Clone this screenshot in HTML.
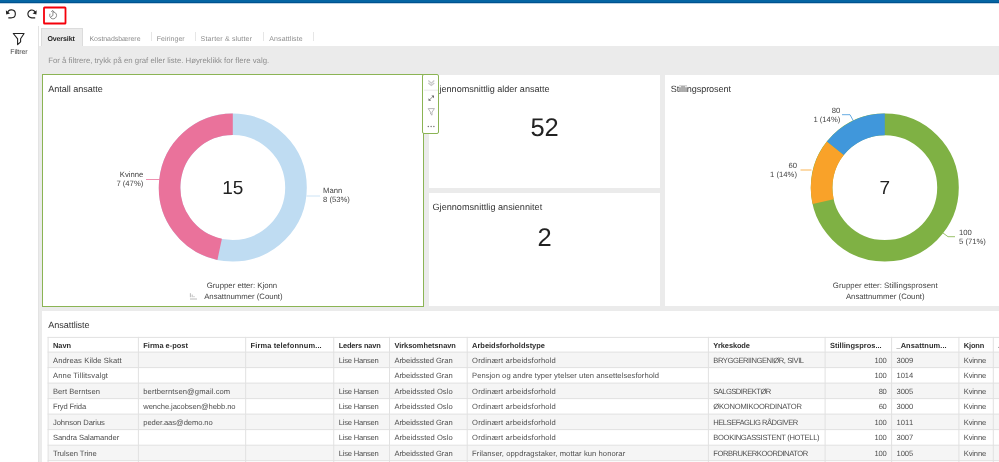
<!DOCTYPE html>
<html lang="no">
<head>
<meta charset="utf-8">
<title>Oversikt</title>
<style>
*{box-sizing:border-box;margin:0;padding:0}
html,body{width:999px;height:462px;overflow:hidden;background:#fff}
body{font-family:"Liberation Sans", sans-serif;color:#333;position:relative;text-rendering:geometricPrecision}
#root{position:absolute;left:0;top:0;width:999px;height:462px;will-change:transform}
.abs{position:absolute}
.t{position:absolute;white-space:nowrap;line-height:1}
#topbar{left:0;top:0;width:999px;height:4px;background:linear-gradient(#0565a3 0,#0565a3 2px,#00528f 2px,#00528f 3px,#bcd3e4 3px,#bcd3e4 4px)}
#vline{left:38px;top:26px;width:1px;height:436px;background:#e3e3e3}
#gray{left:39px;top:46px;width:960px;height:416px;background:#ebebeb}
#redbox{left:43px;top:7px;width:24px;height:18px;border:2px solid #f5000a}
#tabact{left:41px;top:28px;width:42px;height:18px;background:#ebebeb;border:1px solid #dcdcdc;border-bottom:none}
.tsep{position:absolute;top:32px;width:1px;height:9px;background:#e6e6e6}
.panel{position:absolute;background:#fff}
#p1{left:42px;top:74px;width:382px;height:233px;border:1px solid #8bb454}
#menu{left:422px;top:74px;width:17px;height:60px;border:1px solid #8bb454;border-radius:2px;background:#fff}
#p2{left:429px;top:75px;width:231px;height:113px}
#p3{left:429px;top:193px;width:231px;height:113px}
#p4{left:665px;top:75px;width:334px;height:231px}
#p5{left:42px;top:311px;width:957px;height:151px}
table{position:absolute;left:48.1px;top:337.4px;border-collapse:separate;border-spacing:0;table-layout:fixed;width:1011.90px;font-size:7.6px;color:#4e4e4e}
td,th{padding:0 0 0 4.9px;text-align:left;white-space:nowrap;overflow:hidden;font-weight:normal;line-height:1;vertical-align:top}
td{padding-top:4.80px}
th{font-weight:bold;color:#2e2e2e;font-size:7.45px;padding-top:4.30px}
td.n{text-align:right;padding-right:5.1px;padding-left:0}
</style>
</head>
<body>
<div id="root">
<div class="abs" id="topbar"></div>
<div class="abs" id="vline"></div>
<div class="abs" id="gray"></div>

<svg class="abs" style="left:0;top:3px" width="70" height="24" viewBox="0 3 70 24">
  <g fill="none" stroke="#222" stroke-width="1.15" stroke-linejoin="round">
    <path d="M7.5 13.2 A3.95 3.95 0 1 1 11.6 17.8 H8.3"/>
    <path d="M32.2 17.8 H34.6 M32.2 17.8 A3.95 3.95 0 1 1 35.1 13.2" transform="translate(0.6 0)"/>
  </g>
  <path d="M5.9 10.2 L6.2 14.4 L10 13.4 Z" fill="#222"/>
  <path d="M36.7 10.2 L36.4 14.4 L32.6 13.4 Z" fill="#222"/>
  <g fill="none" stroke="#666" stroke-width="0.75" stroke-linecap="round" stroke-linejoin="round">
    <path d="M52.7 11.85 A3.5 3.5 0 1 1 49.8 14.1"/>
    <path d="M51.5 11.5 L52.7 10.4 L53.6 11.9"/>
    <path d="M52.9 12.8 V15.5 L51.3 16.5"/>
  </g>
  <rect x="44" y="7.5" width="21.5" height="16" fill="none" stroke="#f5000a" stroke-width="1.8" rx="0.6"/>
</svg>

<svg class="abs" style="left:10px;top:31px" width="20" height="16" viewBox="10 31 20 16">
  <path d="M13.3 33.5 L24.1 33.5 L20.6 38.8 L20.6 41.8 L17.6 44.6 L17.6 38.8 Z" fill="none" stroke="#222" stroke-width="1.1" stroke-linejoin="round"/>
</svg>

<div class="abs" id="tabact"></div>
<div class="tsep" style="left:151px"></div>
<div class="tsep" style="left:195px"></div>
<div class="tsep" style="left:263px"></div>
<div class="tsep" style="left:313px"></div>

<div class="panel" id="p2"></div>
<div class="panel" id="p3"></div>
<div class="panel" id="p4"></div>
<div class="panel" id="p5"></div>
<div class="panel" id="p1"></div>

<svg class="abs" style="left:42px;top:74px" width="957" height="233" viewBox="42 74 957 233"><circle cx="232.8" cy="187.5" r="63.2" stroke="#bfdcf2" stroke-width="21.6" fill="none"/>
<path d="M219.66 249.32 A63.2 63.2 0 0 1 232.80 124.30" stroke="#ea729b" stroke-width="21.6" fill="none"/>
<circle cx="884.8" cy="187.6" r="63.2" stroke="#7fb144" stroke-width="21.6" fill="none"/>
<path d="M823.18 201.66 A63.2 63.2 0 0 1 835.39 148.20" stroke="#f9a229" stroke-width="21.6" fill="none"/>
<path d="M835.39 148.20 A63.2 63.2 0 0 1 884.80 124.40" stroke="#4097db" stroke-width="21.6" fill="none"/>
<path d="M146 179.5 H159.5" stroke="#ea729b" stroke-width="0.8" fill="none"/>
<path d="M306.5 196 H320" stroke="#bfdcf2" stroke-width="0.8" fill="none"/>
<path d="M842 114.7 H850 L854 122" stroke="#4097db" stroke-width="0.8" fill="none"/>
<path d="M800.5 170 H811.5" stroke="#f9a229" stroke-width="0.8" fill="none"/>
<path d="M943 233 L948 236.7 H955" stroke="#7fb144" stroke-width="0.8" fill="none"/>
<path d="M190.4 293.2 V297.2 M192.2 294.6 V297.2 M194 296 V297.2 M190 299 H197" stroke="#aaa" stroke-width="0.8" fill="none"/></svg>
<svg class="abs" style="left:0;top:330px" width="999" height="132" viewBox="0 330 999 132"><rect x="48.1" y="352.1" width="950.9" height="15.50" fill="#f5f5f5"/><rect x="48.1" y="383.1" width="950.9" height="15.50" fill="#f5f5f5"/><rect x="48.1" y="414.1" width="950.9" height="15.50" fill="#f5f5f5"/><rect x="48.1" y="445.2" width="950.9" height="15.50" fill="#f5f5f5"/><path d="M48.1 336.9 V462 M138.4 336.9 V462 M245.7 336.9 V462 M333.75 336.9 V462 M389.5 336.9 V462 M467.2 336.9 V462 M708.4 336.9 V462 M825.1 336.9 V462 M891.6 336.9 V462 M958.9 336.9 V462 M993.3 336.9 V462 M47.6 337.4 H999 M47.6 352.1 H999 M47.6 367.6 H999 M47.6 383.1 H999 M47.6 398.6 H999 M47.6 414.1 H999 M47.6 429.6 H999 M47.6 445.2 H999 M47.6 460.7 H999 " stroke="#e1e1e1" stroke-width="1" fill="none"/></svg>
<div class="t" style="left:10.30px;top:48.90px;font-size:7px;color:#444;letter-spacing:-0.113px;">Filtrer</div>
<div class="t" style="left:47.40px;top:35.70px;font-size:7px;color:#222;font-weight:bold;letter-spacing:-0.091px;">Oversikt</div>
<div class="t" style="left:89.50px;top:35.70px;font-size:7px;color:#8e8e8e;letter-spacing:-0.055px;">Kostnadsbærere</div>
<div class="t" style="left:156.70px;top:35.70px;font-size:7px;color:#8e8e8e;letter-spacing:0.042px;">Feiringer</div>
<div class="t" style="left:200.60px;top:35.70px;font-size:7px;color:#8e8e8e;letter-spacing:0.174px;">Starter &amp; slutter</div>
<div class="t" style="left:269.30px;top:35.70px;font-size:7px;color:#8e8e8e;letter-spacing:0.100px;">Ansattliste</div>
<div class="t" style="left:48.20px;top:57.00px;font-size:7.8px;color:#8e8e8e;">For å filtrere, trykk på en graf eller liste. Høyreklikk for flere valg.</div>
<div class="t" style="left:48.20px;top:84.50px;font-size:9.1px;color:#333;letter-spacing:-0.044px;">Antall ansatte</div>
<div class="t" style="left:432.50px;top:84.50px;font-size:9.1px;color:#333;letter-spacing:-0.027px;">Gjennomsnittlig alder ansatte</div>
<div class="t" style="left:432.50px;top:202.80px;font-size:9.1px;color:#333;letter-spacing:0.019px;">Gjennomsnittlig ansiennitet</div>
<div class="t" style="left:670.70px;top:84.50px;font-size:9.1px;color:#333;letter-spacing:-0.092px;">Stillingsprosent</div>
<div class="t" style="left:48.20px;top:321.20px;font-size:9.1px;color:#333;letter-spacing:-0.050px;">Ansattliste</div>
<div class="t" style="left:530.41px;top:115.60px;font-size:25.5px;color:#222;">52</div>
<div class="t" style="left:537.51px;top:226.40px;font-size:25.5px;color:#222;">2</div>
<div class="t" style="left:222.23px;top:179.40px;font-size:19px;color:#222;">15</div>
<div class="t" style="left:119.78px;top:170.60px;font-size:7.7px;color:#444;">Kvinne</div>
<div class="t" style="left:116.38px;top:179.60px;font-size:7.7px;color:#444;">7 (47%)</div>
<div class="t" style="left:323.00px;top:187.30px;font-size:7.7px;color:#444;">Mann</div>
<div class="t" style="left:323.00px;top:196.40px;font-size:7.7px;color:#444;">8 (53%)</div>
<div class="t" style="left:206.70px;top:282.20px;font-size:7.8px;color:#444;letter-spacing:-0.008px;">Grupper etter: Kjonn</div>
<div class="t" style="left:204.20px;top:293.10px;font-size:7.8px;color:#444;letter-spacing:-0.024px;">Ansattnummer (Count)</div>
<div class="t" style="left:879.51px;top:179.40px;font-size:19px;color:#222;">7</div>
<div class="t" style="left:831.74px;top:107.20px;font-size:7.7px;color:#444;">80</div>
<div class="t" style="left:813.38px;top:116.20px;font-size:7.7px;color:#444;">1 (14%)</div>
<div class="t" style="left:788.44px;top:161.60px;font-size:7.7px;color:#444;">60</div>
<div class="t" style="left:770.08px;top:170.70px;font-size:7.7px;color:#444;">1 (14%)</div>
<div class="t" style="left:959.00px;top:228.60px;font-size:7.7px;color:#444;">100</div>
<div class="t" style="left:959.00px;top:237.70px;font-size:7.7px;color:#444;">5 (71%)</div>
<div class="t" style="left:832.80px;top:282.20px;font-size:7.8px;color:#444;letter-spacing:0.039px;">Grupper etter: Stillingsprosent</div>
<div class="t" style="left:845.90px;top:293.10px;font-size:7.8px;color:#444;letter-spacing:-0.014px;">Ansattnummer (Count)</div>

<div class="panel" id="menu"></div>
<svg class="abs" style="left:423px;top:75px" width="15" height="58" viewBox="423 75 15 58">
  <path d="M428.3 80.6 L431.3 83.2 L434.3 80.6 M428.3 82.9 L431.3 85.5 L434.3 82.9" fill="none" stroke="#c9c9c9" stroke-width="1.3"/>
  <path d="M424 90.2 H438" stroke="#e4e4e4" stroke-width="0.8"/>
  <path d="M429.4 100 L433.2 96.2" stroke="#777" stroke-width="0.8" fill="none"/>
  <path d="M431.4 95.6 H434 V98.2 Z M428.5 98.2 V100.8 H431.1 Z" fill="#666"/>
  <path d="M428.2 108.6 H434.4 L432 112.2 V115.2 L430.6 114 V112.2 Z" fill="none" stroke="#999" stroke-width="0.7"/>
  <g fill="#777"><circle cx="428.3" cy="126.4" r="0.75"/><circle cx="431.1" cy="126.4" r="0.75"/><circle cx="433.9" cy="126.4" r="0.75"/></g>
</svg>

<table>
<colgroup><col style="width:90.30px"><col style="width:107.30px"><col style="width:88.05px"><col style="width:55.75px"><col style="width:77.70px"><col style="width:241.20px"><col style="width:116.70px"><col style="width:66.50px"><col style="width:67.30px"><col style="width:34.40px"><col style="width:66.70px"></colgroup>
<tr style="height:14.70px"><th><span style="letter-spacing:-0.022px">Navn</span></th><th><span>Firma e-post</span></th><th><span style="letter-spacing:0.139px">Firma telefonnum...</span></th><th><span style="letter-spacing:-0.166px">Leders navn</span></th><th><span style="letter-spacing:-0.025px">Virksomhetsnavn</span></th><th><span style="letter-spacing:0.009px">Arbeidsforholdstype</span></th><th><span style="letter-spacing:-0.125px">Yrkeskode</span></th><th><span style="letter-spacing:0.034px">Stillingspros...</span></th><th><span style="letter-spacing:0.086px">_Ansattnum...</span></th><th><span style="letter-spacing:-0.136px">Kjonn</span></th><th><span>Alder</span></th></tr>
<tr style="height:15.50px"><td><span style="letter-spacing:0.105px">Andreas Kilde Skatt</span></td><td></td><td></td><td><span style="letter-spacing:-0.202px">Lise Hansen</span></td><td><span style="letter-spacing:-0.050px">Arbeidssted Gran</span></td><td><span style="letter-spacing:0.161px">Ordinært arbeidsforhold</span></td><td><span style="letter-spacing:-0.430px">BRYGGERIINGENIØR, SIVIL</span></td><td class="n"><span style="letter-spacing:-0.224px">100</span></td><td><span style="letter-spacing:-0.027px">3009</span></td><td><span style="letter-spacing:-0.139px">Kvinne</span></td><td></td></tr>
<tr style="height:15.50px"><td><span style="letter-spacing:0.131px">Anne Tillitsvalgt</span></td><td></td><td></td><td></td><td><span style="letter-spacing:-0.050px">Arbeidssted Gran</span></td><td><span style="letter-spacing:0.062px">Pensjon og andre typer ytelser uten ansettelsesforhold</span></td><td></td><td class="n"><span style="letter-spacing:-0.224px">100</span></td><td><span style="letter-spacing:-0.027px">1014</span></td><td><span style="letter-spacing:-0.139px">Kvinne</span></td><td></td></tr>
<tr style="height:15.50px"><td><span style="letter-spacing:0.043px">Bert Berntsen</span></td><td><span style="letter-spacing:0.093px">bertberntsen@gmail.com</span></td><td></td><td><span style="letter-spacing:-0.202px">Lise Hansen</span></td><td><span style="letter-spacing:0.029px">Arbeidssted Oslo</span></td><td><span style="letter-spacing:0.161px">Ordinært arbeidsforhold</span></td><td><span style="letter-spacing:-0.543px">SALGSDIREKTØR</span></td><td class="n"><span style="letter-spacing:-0.327px">80</span></td><td><span style="letter-spacing:-0.027px">3005</span></td><td><span style="letter-spacing:-0.139px">Kvinne</span></td><td></td></tr>
<tr style="height:15.50px"><td><span style="letter-spacing:-0.161px">Fryd Frida</span></td><td><span style="letter-spacing:-0.071px">wenche.jacobsen@hebb.no</span></td><td></td><td><span style="letter-spacing:-0.202px">Lise Hansen</span></td><td><span style="letter-spacing:0.029px">Arbeidssted Oslo</span></td><td><span style="letter-spacing:0.161px">Ordinært arbeidsforhold</span></td><td><span style="letter-spacing:-0.225px">ØKONOMIKOORDINATOR</span></td><td class="n"><span style="letter-spacing:-0.327px">60</span></td><td><span style="letter-spacing:-0.027px">3000</span></td><td><span style="letter-spacing:-0.139px">Kvinne</span></td><td></td></tr>
<tr style="height:15.50px"><td><span style="letter-spacing:-0.069px">Johnson Darius</span></td><td><span style="letter-spacing:-0.072px">peder.aas@demo.no</span></td><td></td><td><span style="letter-spacing:-0.202px">Lise Hansen</span></td><td><span style="letter-spacing:-0.050px">Arbeidssted Gran</span></td><td><span style="letter-spacing:0.161px">Ordinært arbeidsforhold</span></td><td><span style="letter-spacing:-0.480px">HELSEFAGLIG RÅDGIVER</span></td><td class="n"><span style="letter-spacing:-0.224px">100</span></td><td><span style="letter-spacing:0.114px">1011</span></td><td><span style="letter-spacing:-0.139px">Kvinne</span></td><td></td></tr>
<tr style="height:15.60px"><td><span style="letter-spacing:-0.085px">Sandra Salamander</span></td><td></td><td></td><td><span style="letter-spacing:-0.202px">Lise Hansen</span></td><td><span style="letter-spacing:0.029px">Arbeidssted Oslo</span></td><td><span style="letter-spacing:0.161px">Ordinært arbeidsforhold</span></td><td><span style="letter-spacing:-0.329px">BOOKINGASSISTENT (HOTELL)</span></td><td class="n"><span style="letter-spacing:-0.224px">100</span></td><td><span style="letter-spacing:-0.027px">3007</span></td><td><span style="letter-spacing:-0.139px">Kvinne</span></td><td></td></tr>
<tr style="height:15.50px"><td><span style="letter-spacing:-0.025px">Trulsen Trine</span></td><td></td><td></td><td><span style="letter-spacing:-0.202px">Lise Hansen</span></td><td><span style="letter-spacing:-0.050px">Arbeidssted Gran</span></td><td><span style="letter-spacing:0.076px">Frilanser, oppdragstaker, mottar kun honorar</span></td><td><span style="letter-spacing:-0.451px">FORBRUKERKOORDINATOR</span></td><td class="n"><span style="letter-spacing:-0.224px">100</span></td><td><span style="letter-spacing:-0.027px">1005</span></td><td><span style="letter-spacing:-0.139px">Kvinne</span></td><td></td></tr>
</table>
</div>
</body>
</html>
